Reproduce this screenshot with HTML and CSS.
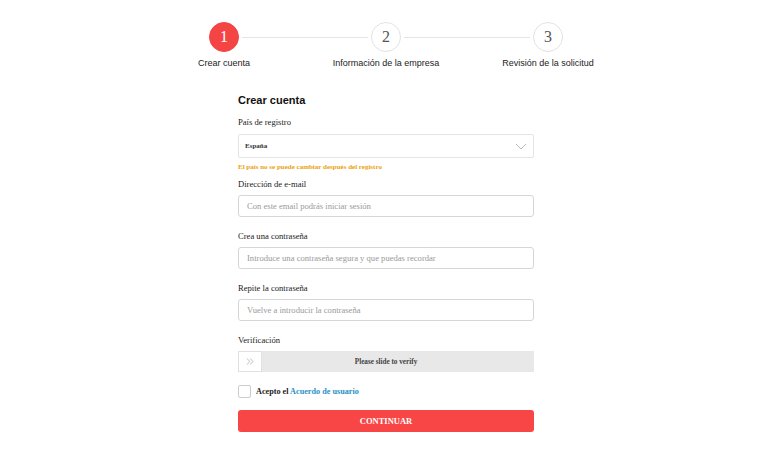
FILE: index.html
```html
<!DOCTYPE html>
<html lang="es">
<head>
  <meta charset="UTF-8" />
  <meta name="viewport" content="width=device-width, initial-scale=1" />
  <title>Crear cuenta</title>
  <link rel="stylesheet" href="styles.css">
</head>
<body>

<div class="steps">
  <div class="step active">
    <div class="circle">1</div>
    <div class="step-label">Crear cuenta</div>
  </div>
  <div class="line"></div>
  <div class="step">
    <div class="circle">2</div>
    <div class="step-label">Información de la empresa</div>
  </div>
  <div class="line"></div>
  <div class="step">
    <div class="circle">3</div>
    <div class="step-label">Revisión de la solicitud</div>
  </div>
</div>

<form class="form">
  <h2>Crear cuenta</h2>

  <label class="label first">País de registro</label>
  <div class="select">
    <span>España</span>
    <svg width="12" height="7" viewBox="0 0 12 7"><path d="M1 1 L6 6 L11 1" fill="none" stroke="#bbb" stroke-width="1"/></svg>
  </div>
  <div class="hint">El país no se puede cambiar después del registro</div>

  <label class="label">Dirección de e-mail</label>
  <input class="field" type="text" placeholder="Con este email podrás iniciar sesión">

  <label class="label">Crea una contraseña</label>
  <input class="field" type="password" placeholder="Introduce una contraseña segura y que puedas recordar">

  <label class="label">Repite la contraseña</label>
  <input class="field" type="password" placeholder="Vuelve a introducir la contraseña">

  <label class="label">Verificación</label>
  <div class="slider">
    <div class="handle">
      <svg width="8" height="7" viewBox="0 0 8 7"><path d="M1 0.5 L3.8 3.5 L1 6.5 M4.2 0.5 L7 3.5 L4.2 6.5" fill="none" stroke="#b5b5b5" stroke-width="0.9"/></svg>
    </div>
    <div class="slider-text">Please slide to verify</div>
  </div>

  <div class="agree">
    <span class="box"></span>
    <span>Acepto el <a href="#">Acuerdo de usuario</a></span>
  </div>

  <button type="button" class="submit">CONTINUAR</button>
</form>

</body>
</html>
```

FILE: styles.css
```css
body {
  margin: 0;
  background: #fff;
  color: #222;
  font-family: "Liberation Serif", "Times New Roman", serif;
}
.steps {
  display: flex;
  align-items: flex-start;
  justify-content: center;
  padding-top: 22px;
  height: 56px;
}
.step {
  width: 30px;
  display: flex;
  flex-direction: column;
  align-items: center;
}
.circle {
  width: 28px;
  height: 28px;
  border: 1px solid #e2e2e2;
  border-radius: 50%;
  display: flex;
  align-items: center;
  justify-content: center;
  font-size: 16px;
  color: #555;
  background: #fff;
}
.step.active .circle {
  background: #f44444;
  border-color: #f44444;
  color: #fff;
}
.step-label {
  margin-top: 6px;
  white-space: nowrap;
  font-family: "Liberation Sans", Arial, sans-serif;
  font-size: 9px;
  color: #222;
}
.line {
  width: 126px;
  height: 1px;
  background: #e4e4e4;
  margin: 15px 3px 0;
}
.form {
  width: 296px;
  margin: 0 auto;
  display: flex;
  flex-direction: column;
}
.form h2 {
  margin: 15px 0 0;
  font-family: "Liberation Sans", Arial, sans-serif;
  font-size: 11px;
  font-weight: bold;
  color: #111;
  line-height: 14px;
}
.label {
  font-size: 8.6px;
  line-height: 12px;
  margin-bottom: 5px;
  color: #1a1a1a;
}
.label.first {
  margin-top: 9px;
}
.select {
  margin-top: 1px;
  height: 22px;
  border: 1px solid #e4e4e4;
  border-radius: 2px;
  display: flex;
  align-items: center;
  justify-content: space-between;
  padding: 0 6px;
  font-size: 7px;
  font-weight: bold;
  color: #333;
}
.hint {
  font-size: 7px;
  font-weight: bold;
  color: #eba10c;
  margin-top: 5px;
  line-height: 8px;
}
.hint + .label {
  margin-top: 7px;
}
.field {
  height: 22px;
  border: 1px solid #d6d6d6;
  border-radius: 3px;
  padding: 0 8px;
  box-sizing: border-box;
  font-family: inherit;
  font-size: 8.6px;
  margin: 0 0 13px;
}
.field::placeholder {
  color: #999;
}
.slider {
  height: 21px;
  background: #e8e8e8;
  position: relative;
  display: flex;
  align-items: center;
  justify-content: center;
}
.handle {
  position: absolute;
  left: 0;
  top: 0;
  width: 24px;
  height: 21px;
  background: #fff;
  border: 1px solid #e0e0e0;
  box-sizing: border-box;
  display: flex;
  align-items: center;
  justify-content: center;
}
.slider-text {
  font-size: 7.2px;
  font-weight: bold;
  color: #444;
}
.agree {
  display: flex;
  align-items: center;
  gap: 5px;
  margin-top: 13px;
  height: 13px;
  font-size: 8.2px;
  font-weight: bold;
  color: #222;
}
.agree .box {
  width: 11px;
  height: 11px;
  border: 1px solid #ccc;
  border-radius: 2px;
}
.agree a {
  color: #2a8fc6;
  text-decoration: none;
}
.submit {
  margin-top: 12px;
  height: 22px;
  border: none;
  border-radius: 3px;
  background: #f84646;
  color: #fff;
  font-family: inherit;
  font-size: 8.5px;
  font-weight: bold;
  cursor: pointer;
}
```
